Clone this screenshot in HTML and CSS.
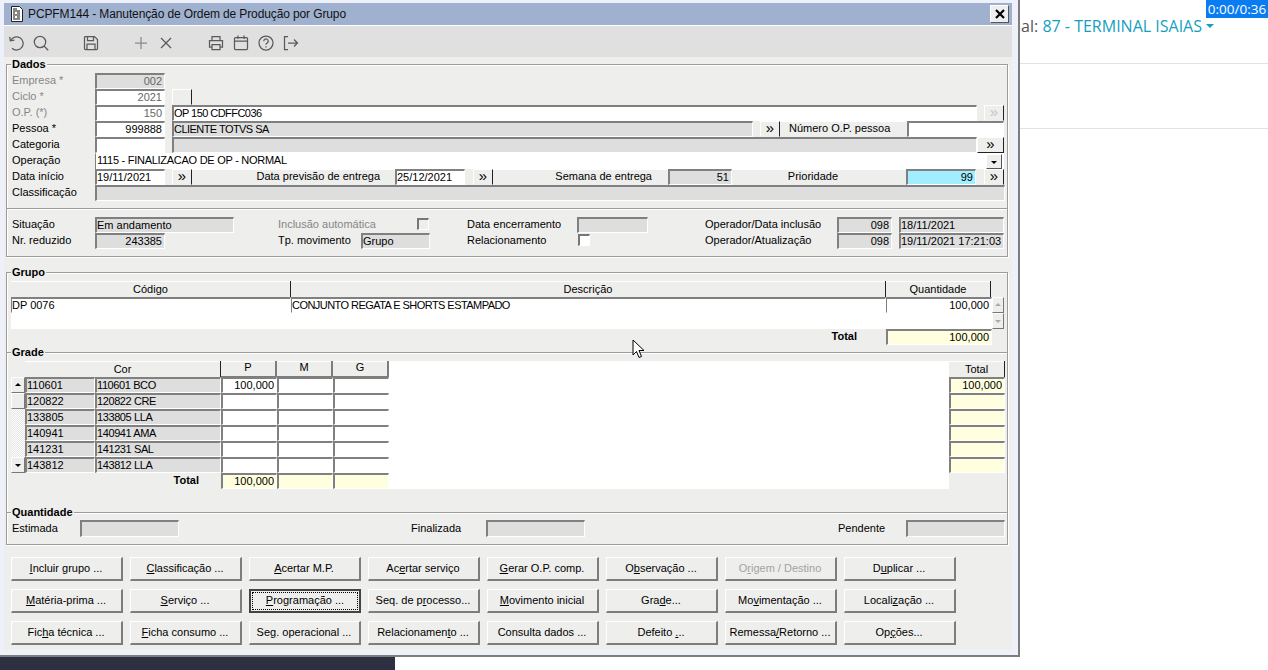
FILE: index.html
```html
<!DOCTYPE html>
<html lang="pt-BR">
<head>
<meta charset="utf-8">
<title>PCPFM144</title>
<link rel="stylesheet" href="styles.css">
</head>
<body>
<div class="page">
  <header class="top-band"><span class="terminal">Terminal: <a class="terminal-link">87 - TERMINAL ISAIAS<i class="caret"></i></a></span></header>
  <div class="second-band"></div>
  <div class="timer">0:00/0:36</div>
  <div class="dock"></div>

  <section class="window">
    <div class="titlebar">
      <svg class="title-icon" viewBox="0 0 14 16" width="14" height="16"><path d="M1.5 .5h8l3 3v12h-11z" fill="#fff" stroke="#222"/><path d="M3 3h4M3 5h7M3 7h2M7 7h3M3 9h7M3 11h2M7 11h3M3 13h7" stroke="#111" stroke-width="1.2"/></svg>
      <span class="title-text">PCPFM144 - Manutenção de Ordem de Produção por Grupo</span>
      <button class="close" aria-label="Fechar"><svg viewBox="0 0 10 10" width="10" height="10"><path d="M1 1l8 8M9 1l-8 8" stroke="#000" stroke-width="2.2"/></svg></button>
    </div>
    <div class="toolbar">
      <svg class="ico" viewBox="0 0 16 16"><path d="M2.600 5.500A6.600 6.600 0 1 1 4 13.200"/><path d="M1.700 1.800l.7 4 4-.7"/></svg>
      <svg class="ico" viewBox="0 0 16 16"><circle cx="7" cy="7" r="5.700"/><path d="M11 11l4.200 4.200"/></svg>
      <svg class="ico sep" viewBox="0 0 16 16"><path d="M1.500 2.500a1 1 0 0 1 1-1h9l3 3v9a1 1 0 0 1-1 1h-11a1 1 0 0 1-1-1z"/><path d="M4.500 1.500v4h6v-4M4 14.500v-5.500h8v5.500"/></svg>
      <svg class="ico sep plus" viewBox="0 0 16 16"><path d="M8 2v12M2 8h12"/></svg>
      <svg class="ico" viewBox="0 0 16 16"><path d="M3 3l10 10M13 3l-10 10"/></svg>
      <svg class="ico sep" viewBox="0 0 16 16"><path d="M4 5V1.500h8V5M4 12H1.500V5.500h13V12H12"/><path d="M4 9.500h8v5H4z"/></svg>
      <svg class="ico" viewBox="0 0 16 16"><rect x="1.500" y="2.500" width="13" height="12" rx="1"/><path d="M1.500 6h13M5 .5v3.500M11 .5v3.500"/></svg>
      <svg class="ico" viewBox="0 0 16 16"><circle cx="8" cy="8" r="7"/><path d="M5.800 6.200a2.200 2.200 0 1 1 3.400 1.800c-.8.500-1.200 1-1.200 1.800M8 11.200v1.300"/></svg>
      <svg class="ico" viewBox="0 0 16 16"><path d="M5 1.500H1.500v13H5M5 8h9.500M11 4.500L14.500 8 11 11.500"/></svg>
    </div>

    <div class="form">
      <div class="box">
        <div class="legend">Dados</div>
        <div class="row"><span class="lbl off">Empresa *</span><span class="f ro r w70 gray-text">002</span></div>
        <div class="row"><span class="lbl off">Ciclo *</span><span class="f r w70 gray-text">2021</span><button class="btn-s ml7 w20"></button></div>
        <div class="row"><span class="lbl off">O.P. (*)</span><span class="f r w70 gray-text">150</span><span class="f caps ml7 w805">OP 150 CDFFC036</span><button class="btn-s ml7 w20 dim">»</button></div>
        <div class="row"><span class="lbl">Pessoa *</span><span class="f r w70">999888</span><span class="f caps ro ml7 w581">CLIENTE TOTVS SA</span><button class="btn-s ml7 w20">»</button><span class="cap cap-num w126">Número O.P. pessoa</span><span class="f w97 ml1"></span></div>
        <div class="row"><span class="lbl">Categoria</span><span class="f w70"></span><span class="f ro ml7 w805"></span><button class="btn-s btn-deep w27">»</button></div>
        <div class="row"><span class="lbl">Operação</span><span class="f sel w909"><span class="caps-s">1115 - FINALIZACAO DE OP - NORMAL</span><button class="btn-drop"><i class="tri-d"></i></button></span></div>
        <div class="row"><span class="lbl">Data início</span><span class="f w70">19/11/2021</span><button class="btn-s ml7 w20">»</button><span class="cap cap-date w203">Data previsão de entrega</span><span class="f w70">25/12/2021</span><button class="btn-s ml8 w20">»</button><span class="cap cap-week w175">Semana de entrega</span><span class="f ro r w64">51</span><span class="cap cap-prio w174">Prioridade</span><span class="f cy r w70">99</span><button class="btn-s ml8 w20">»</button></div>
        <div class="row"><span class="lbl">Classificação</span><span class="f ro w910"></span></div>

        <div class="section">
          <div class="row"><span class="lbl">Situação</span><span class="f ro w139">Em andamento</span><span class="lbl off ml43 w140">Inclusão automática</span><i class="check dim-check"></i><span class="lbl ml37 w111">Data encerramento</span><span class="f ro w71"></span><span class="lbl ml56 w133">Operador/Data inclusão</span><span class="f ro r w55">098</span><span class="f ro ml7 w105">18/11/2021</span></div>
          <div class="row"><span class="lbl">Nr. reduzido</span><span class="f ro r w70">243385</span><span class="lbl ml112 w84">Tp. movimento</span><span class="f ro w69">Grupo</span><span class="lbl ml36 w112">Relacionamento</span><i class="check"></i><span class="lbl ml114 w133">Operador/Atualização</span><span class="f ro r w55">098</span><span class="f ro ml7 w105">19/11/2021 17:21:03</span></div>
        </div>
      </div>

      <div class="box box-lower">
        <div class="legend">Grupo</div>
        <div class="grupo-grid">
          <div class="th th-dark">Código</div>
          <div class="th th-dark">Descrição</div>
          <div class="th th-dark th-last">Quantidade</div>
          <div class="scroll-small">
            <button class="btn-arrow"><i class="tri-u light"></i></button>
            <button class="btn-arrow"><i class="tri-d light"></i></button>
          </div>
          <span class="f thin">DP 0076</span>
          <span class="f thin caps">CONJUNTO REGATA E SHORTS ESTAMPADO</span>
          <span class="f thin r">100,000</span>
          <div class="blank span3"></div>
          <div class="total-label span2">Total</div>
          <span class="f yl r">100,000</span>
        </div>

        <div class="section-plain">
          <div class="legend">Grade</div>
          <div class="grade-grid">
            <div class="corner"></div>
            <div class="th th-dark span2">Cor</div>
            <div class="th th-gray">P</div>
            <div class="th th-gray">M</div>
            <div class="th th-gray">G</div>
            <div class="grade-blank"></div>
            <div class="th th-dark">Total</div>

            <button class="btn-arrow"><i class="tri-u"></i></button>
            <span class="f ro">110601</span><span class="f ro caps-g">110601 BCO</span>
            <span class="f r">100,000</span><span class="f"></span><span class="f"></span>
            <span class="f yl r">100,000</span>

            <button class="btn-thumb"></button>
            <span class="f ro">120822</span><span class="f ro caps-g">120822 CRE</span>
            <span class="f"></span><span class="f"></span><span class="f"></span>
            <span class="f yl"></span>

            <div class="track"></div>
            <span class="f ro">133805</span><span class="f ro caps-g">133805 LLA</span>
            <span class="f"></span><span class="f"></span><span class="f"></span>
            <span class="f yl"></span>

            <div class="track"></div>
            <span class="f ro">140941</span><span class="f ro caps-g">140941 AMA</span>
            <span class="f"></span><span class="f"></span><span class="f"></span>
            <span class="f yl"></span>

            <div class="track"></div>
            <span class="f ro">141231</span><span class="f ro caps-g">141231 SAL</span>
            <span class="f"></span><span class="f"></span><span class="f"></span>
            <span class="f yl"></span>

            <button class="btn-arrow"><i class="tri-d"></i></button>
            <span class="f ro">143812</span><span class="f ro caps-g">143812 LLA</span>
            <span class="f"></span><span class="f"></span><span class="f"></span>
            <span class="f yl"></span>

            <div class="total-label span3 total-grade">Total</div>
            <span class="f yl r">100,000</span><span class="f yl"></span><span class="f yl"></span>
          </div>
        </div>

        <div class="section-qty">
          <div class="legend">Quantidade</div>
          <div class="row row-qty"><span class="lbl w69">Estimada</span><span class="f ro w99"></span><span class="lbl ml231 w76">Finalizada</span><span class="f ro w99"></span><span class="lbl ml252 w69">Pendente</span><span class="f ro w99"></span></div>
        </div>
      </div>

      <div class="actions">
        <button class="act"><u>I</u>ncluir grupo ...</button>
        <button class="act"><u>C</u>lassificação ...</button>
        <button class="act"><u>A</u>certar M.P.</button>
        <button class="act">Ac<u>e</u>rtar serviço</button>
        <button class="act"><u>G</u>erar O.P. comp.</button>
        <button class="act">O<u>b</u>servação ...</button>
        <button class="act disabled">O<u>r</u>igem / Destino</button>
        <button class="act">D<u>u</u>plicar ...</button>
        <button class="act"><u>M</u>atéria-prima ...</button>
        <button class="act"><u>S</u>erviço ...</button>
        <button class="act focus"><span class="focus-ring"><u>P</u>rogramação ...</span></button>
        <button class="act">Seq. de p<u>r</u>ocesso...</button>
        <button class="act"><u>M</u>ovimento inicial</button>
        <button class="act">Gra<u>d</u>e...</button>
        <button class="act">Mo<u>v</u>imentação ...</button>
        <button class="act">Locali<u>z</u>ação ...</button>
        <button class="act">Fic<u>h</u>a técnica ...</button>
        <button class="act"><u>F</u>icha consumo ...</button>
        <button class="act">Se<u>g</u>. operacional ...</button>
        <button class="act">Relacionamen<u>t</u>o ...</button>
        <button class="act">Consulta dados ...</button>
        <button class="act">Defeito <u>.</u>..</button>
        <button class="act">Remessa<u>/</u>Retorno ...</button>
        <button class="act">Op<u>ç</u>ões...</button>
      </div>
    </div>
  </section>

  <svg class="cursor" viewBox="0 0 14 20" width="14" height="20"><path d="M1 1v15l3.500-3.500 2.500 6 2.500-1-2.500-6h5z" fill="#fff" stroke="#000" stroke-width="1"/></svg>
</div>
</body>
</html>
```

FILE: styles.css
```css
* { box-sizing: border-box; }
html, body { margin: 0; padding: 0; }
body { width: 1268px; height: 670px; overflow: hidden; background: #fff; font-family: "Liberation Sans", Arial, sans-serif; font-size: 11px; color: #000; }
button { font: inherit; color: inherit; padding: 0; margin: 0; }

.page { position: relative; width: 1268px; height: 670px; overflow: hidden; }

/* page behind the window */
.top-band { height: 64px; border-bottom: 1px solid #e2e2e2; padding: 16px 54px 0 0; display: flex; justify-content: flex-end; }
.second-band { height: 65px; border-bottom: 1px solid #e2e2e2; }
.terminal { font-family: "Open Sans", sans-serif; font-size: 16px; line-height: 20px; color: #555; white-space: nowrap; }
.terminal-link { color: #139fbf; }
.caret { display: inline-block; width: 0; height: 0; margin: 0 0 4px 4px; border: 4px solid transparent; border-top-color: #139fbf; border-bottom: 0; vertical-align: middle; }
.timer { position: absolute; top: 0; right: 0; width: 62px; height: 18px; background: #0a7cf2; color: #fff; font-family: "Open Sans", sans-serif; font-size: 13.500px; line-height: 19px; text-align: center; white-space: nowrap; }
.dock { position: absolute; left: 0; top: 657px; width: 395px; height: 13px; background: #2d3040; }

/* window */
.window { position: absolute; left: 0; top: 0; width: 1020px; height: 657px; padding: 3px 6px 5px 4px; background: #eef0fa; border-right: 2px solid #7d7d7d; border-bottom: 2px solid #7d7d7d; }
.titlebar { height: 22px; background: #9fb1cf; display: flex; align-items: center; padding-left: 6px; position: relative; }
.title-icon { flex: none; }
.title-text { margin-left: 4px; font-size: 12px; letter-spacing: -.12px; color: #111; white-space: nowrap; }
.close { position: absolute; right: 3px; top: 2px; width: 19px; height: 18px; background: #eee; border: 1px solid; border-color: #fff #555 #555 #fff; display: flex; align-items: center; justify-content: center; }
.toolbar { height: 32px; border-top: 1px solid #fff; background: #e0e0e0; display: flex; align-items: center; gap: 9px; padding: 2px 0 0 4px; }
.ico { width: 16px; height: 16px; fill: none; stroke: #5a5a5a; stroke-width: 1.250; flex: none; }
.sep { margin-left: 25px; }
.plus { stroke: #8a8a8a; }

.form { background: #eeeeec; height: 593px; padding: 7px 4px 0 2px; }
.box { width: 1002px; border: 1px solid #9c9c9c; padding: 0 4px; box-shadow: 1px 1px 0 #fff, inset 1px 1px 0 #fff; }
.box-lower { margin-top: 15px; }
.legend { width: fit-content; height: 16px; margin: -8px 0 0; padding: 0 1px; background: #eeeeec; font-weight: 700; line-height: 15px; }
.section { margin: 7px -4px 0; padding: 8px 4px 7px; border-top: 1px solid #9c9c9c; box-shadow: inset 0 1px 0 #fff; }
.section-plain { margin: 7px -4px 0; padding: 0 4px; border-top: 1px solid #9c9c9c; box-shadow: inset 0 1px 0 #fff; }
.section-qty { margin: 23px -4px 0; padding: 0 4px 7px; border-top: 1px solid #9c9c9c; box-shadow: inset 0 1px 0 #fff; }

.row { display: flex; height: 16px; }
.row-qty { height: 17px; margin-top: -1px; }
.row-qty .lbl { line-height: 17px; }
.row-qty .f { height: 17px; }
.lbl { flex: none; width: 84px; padding-left: 1px; line-height: 15px; white-space: nowrap; color: #000; }
.off { color: #868686; }
.gray-text { color: #666; }
.cap { flex: none; line-height: 15px; white-space: nowrap; background: #eeeeec; box-shadow: inset 0 1px 0 #fff; }
.cap-num { padding-left: 9px; }
.cap-date { text-align: right; padding-right: 15px; }
.cap-week { text-align: right; padding-right: 16px; }
.cap-prio { text-align: right; padding-right: 68px; }

.f { display: block; flex: none; height: 16px; overflow: hidden; white-space: nowrap; background: #fff; border-style: solid; border-width: 2px 1px 1px 2px; border-color: #808080 #fff #fff #808080; line-height: 13px; padding: 0 2px 0 0; }
.thin { border-left-width: 1px; }
.caps { letter-spacing: -.55px; }
.caps-s { letter-spacing: -.27px; }
.caps-g { letter-spacing: -.4px; }
.ro { background: #dedede; }
.yl { background: #ffffe0; }
.cy { background: #a0eeff; }
.r { text-align: right; }
.sel { display: flex; justify-content: space-between; border-width: 1px 0 0 1px; border-color: #fff #fff #fff #808080; line-height: 13px; padding: 0 2px 0 1px; }
.check { flex: none; display: block; width: 12px; height: 12px; margin-top: 1px; background: #fff; border: 1px solid; border-width: 2px 1px 1px 2px; border-color: #777 #fff #fff #777; }
.dim-check { background: #eeeeec; }

.btn-s { flex: none; height: 16px; background: #eeeeec; border-style: solid; border-width: 1px; border-color: #fff #222 #eeeeec #fff; font-family: "Liberation Sans", sans-serif; font-size: 15px; line-height: 11px; padding-bottom: 3px; }
.btn-deep { border-bottom-color: #222; }
.dim { color: #c4c4c4; }
.btn-drop { flex: none; width: 16px; height: 15px; background: #eeeeec; border: 1px solid; border-color: #fff #555 #555 #fff; display: flex; align-items: center; justify-content: center; }
.tri-d, .tri-u { display: block; width: 0; height: 0; border: 3px solid transparent; }
.tri-d { border-top-color: #000; border-bottom: 0; margin-top: 1px; }
.tri-u { border-bottom-color: #000; border-top: 0; margin-bottom: 1px; }
.tri-d.light { border-top-color: #aaa; }
.tri-u.light { border-bottom-color: #aaa; }

.w20 { width: 20px; } .w27 { width: 27px; } .w55 { width: 55px; } .w64 { width: 64px; }
.w69 { width: 69px; } .w70 { width: 70px; } .w71 { width: 71px; } .w76 { width: 76px; }
.w84 { width: 84px; } .w97 { width: 97px; } .w99 { width: 99px; } .w105 { width: 105px; }
.w111 { width: 111px; } .w112 { width: 112px; } .w126 { width: 126px; } .w133 { width: 133px; }
.w139 { width: 139px; } .w140 { width: 140px; } .w174 { width: 174px; } .w175 { width: 175px; }
.w203 { width: 203px; } .w581 { width: 581px; } .w805 { width: 805px; } .w909 { width: 909px; } .w910 { width: 910px; }
.ml1 { margin-left: 1px; } .ml7 { margin-left: 7px; } .ml8 { margin-left: 8px; } .ml36 { margin-left: 36px; }
.ml37 { margin-left: 37px; } .ml43 { margin-left: 43px; } .ml56 { margin-left: 56px; } .ml112 { margin-left: 112px; }
.ml114 { margin-left: 114px; } .ml231 { margin-left: 231px; } .ml252 { margin-left: 252px; }

/* grids */
.grupo-grid { display: grid; grid-template-columns: 280px 595px 106px 12px; grid-auto-rows: 16px; }
.grade-grid { display: grid; grid-template-columns: 14px 70px 126px 56px 56px 56px 560px 56px; grid-auto-rows: 16px; }
.grupo-grid .f, .grade-grid .f { width: auto; }
.th { height: 16px; line-height: 16px; text-align: center; background: #eeeeec; box-shadow: inset 0 1px 0 #fff; }
.th-dark { border-right: 1px solid #222; }
.th-last { margin-right: 1px; }
.th-gray { border-right: 2px solid #7d7d7d; border-bottom: 1px solid #7d7d7d; line-height: 13px; }
.span2 { grid-column: span 2; }
.span3 { grid-column: span 3; }
.blank { background: #fff; }
.total-label { font-weight: 700; text-align: right; padding-right: 29px; line-height: 14px; }
.total-grade { padding-right: 22px; }
.scroll-small { display: flex; flex-direction: column; height: 32px; margin-top: 16px; grid-column: 4; grid-row: 1 / span 3; }
.btn-arrow { display: flex; align-items: center; justify-content: center; width: 100%; background: #eeeeec; border: 1px solid; border-color: #fff #777 #777 #fff; height: 16px; }
.btn-thumb { background: #eeeeec; border: 1px solid; border-color: #fff #777 #777 #fff; height: 16px; }
.track { background-color: #fff; background-image: repeating-conic-gradient(#e6e6e6 0 25%, #fff 0 50%); background-size: 2px 2px; }
.corner { background: #eeeeec; }
.grade-blank { background: #fff; grid-row: span 8; }

/* action buttons */
.actions { display: grid; grid-template-columns: repeat(8, 112px); grid-auto-rows: 24px; gap: 8px 7px; margin: 12px 0 0 5px; }
.act { background: #eeeeec; border-style: solid; border-width: 1px 2px 2px 1px; border-color: #fff #7d7d7d #7d7d7d #fff; text-align: center; white-space: nowrap; line-height: 18px; padding: 0 1px 1px 0; }
.disabled { color: #a2a2a2; }
.focus { border: 2px solid #444; padding: 1px; }
.focus-ring { display: block; height: 100%; border: 1px dotted #000; line-height: 14px; }

.cursor { position: absolute; left: 632px; top: 339px; }
```
